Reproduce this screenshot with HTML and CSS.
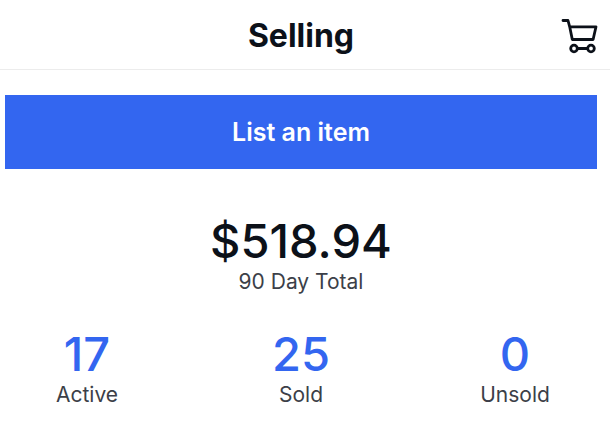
FILE: index.html
```html
<!DOCTYPE html>
<html lang="en">
<head>
    <meta charset="utf-8">
    <title>Selling</title>
    <link rel="stylesheet" href="styles.css">
</head>
<body>
  <header class="top-bar">
    <h1 class="title">Selling</h1>
    <button class="cart-button" type="button" aria-label="Cart">
      <svg width="38" height="38" viewBox="0 0 38 38" fill="none" stroke="#0c1119" stroke-width="2.8" stroke-linecap="round" stroke-linejoin="round">
        <path d="M3 3.500h5l1.700 6.300L12.300 22.500h20.800l2.900-12.700H9.700"/>
        <path d="M17.500 31.500h10"/>
        <circle cx="14" cy="31.500" r="3.300"/>
        <circle cx="31" cy="31.500" r="3.300"/>
      </svg>
    </button>
  </header>

  <main class="content">
    <button class="list-button" type="button">List an item</button>

    <section class="total">
      <div class="amount">$518.94</div>
      <div class="label">90 Day Total</div>
    </section>

    <nav class="stats">
      <a class="stat" href="#"><span class="count">17</span><span class="label">Active</span></a>
      <a class="stat" href="#"><span class="count">25</span><span class="label">Sold</span></a>
      <a class="stat" href="#"><span class="count">0</span><span class="label">Unsold</span></a>
    </nav>
  </main>
</body>
</html>
```
FILE: styles.css
```css
body {
    margin: 0;
    background-color: #fff;
    color: #0c1119;
    font-family: Inter, "Liberation Sans", sans-serif;
}

.top-bar {
    display: grid;
    grid-template-columns: 1fr auto 1fr;
    align-items: center;
    padding: 16px 12px 13px 4px;
    border-bottom: 1px solid #ececec;
}

.title {
    grid-column: 2;
    margin: 0;
    font-size: 32px;
    line-height: 40px;
    font-weight: 700;
}

.cart-button {
    justify-self: end;
    padding: 0;
    border: none;
    background: none;
    cursor: pointer;
}

.cart-button svg {
    display: block;
}

.content {
    padding: 25px 13px 0 5px;
}

.list-button {
    display: block;
    width: 100%;
    padding: 21px 0;
    border: none;
    background-color: #3366f0;
    color: #fff;
    font-family: inherit;
    font-size: 25px;
    line-height: 32px;
    font-weight: 600;
    cursor: pointer;
}

.total {
    margin-top: 44px;
    text-align: center;
}

.amount,
.count {
    font-size: 47px;
    line-height: 56px;
    font-weight: 500;
}

.label {
    font-size: 21px;
    line-height: 26px;
    color: #3c3f48;
}

.stats {
    display: flex;
    justify-content: space-between;
    margin-top: 31px;
}

.stat {
    display: flex;
    flex-direction: column;
    width: 164px;
    text-align: center;
    text-decoration: none;
}

.count {
    color: #3366f0;
}
```
